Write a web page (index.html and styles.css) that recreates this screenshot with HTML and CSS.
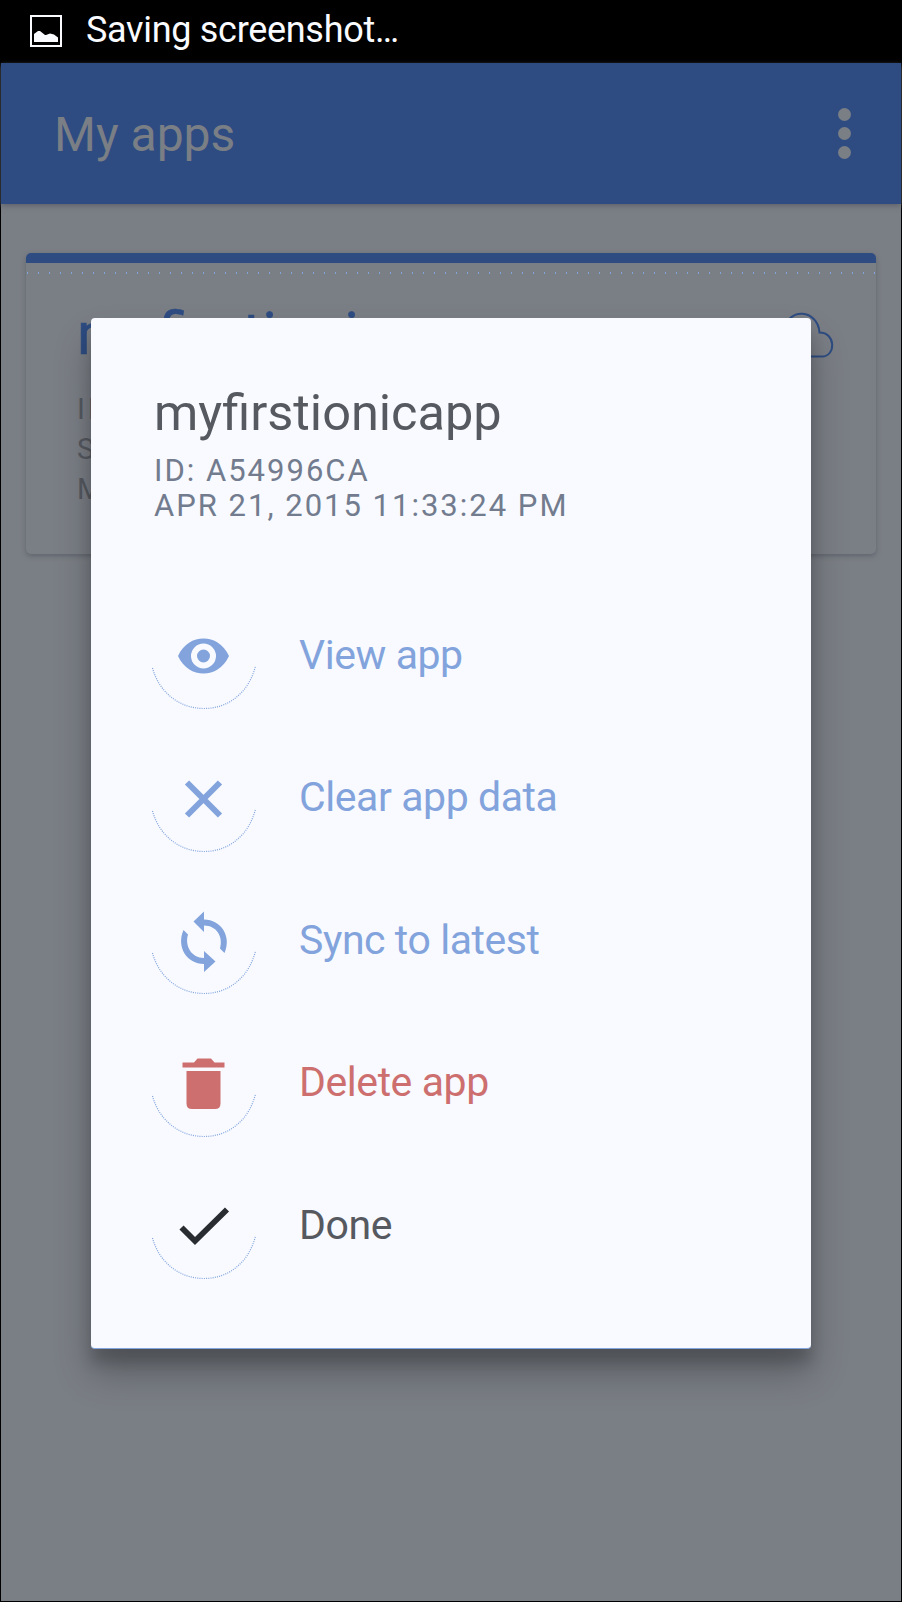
FILE: index.html
```html
<!DOCTYPE html>
<html lang="en">
<head>
<meta charset="utf-8">
<title>My apps</title>
<link rel="stylesheet" href="styles.css">
</head>
<body>
<div class="screen">
  <div class="status">
    <svg class="status-icon" viewBox="0 0 32 32"><rect x="1" y="1" width="30" height="30" fill="none" stroke="#f9fbff" stroke-width="2"/><path d="M4 27v-8l4-3 2 0 5 4 1 0 4-1.500 4 1 4 3v4.500z" fill="#f9fbff"/></svg>
    <span class="status-text">Saving screenshot…</span>
  </div>
  <div class="page">
    <header class="bar">
      <h1 class="bar-title">My apps</h1>
      <div class="dots"><i class="dot"></i><i class="dot"></i><i class="dot"></i></div>
    </header>
    <section class="card">
      <div class="card-head">
        <h2 class="card-title">myfirstionicapp</h2>
        <svg class="cloud" viewBox="0 0 66 46"><path d="M15 44.500h39c14 0 14-24-2.500-24C50-3 19-5 17 18 0 16-3 44.500 15 44.500z" fill="none" stroke="#2e4c82" stroke-width="2"/></svg>
      </div>
      <div class="card-meta"><p>ID</p><p>S</p><p>M</p></div>
    </section>
  </div>
  <div class="modal">
    <h2 class="modal-title">myfirstionicapp</h2>
    <p class="meta meta-id">ID: A54996CA</p>
    <p class="meta meta-date">APR 21, 2015 11:33:24 PM</p>
    <div class="actions">
      <div class="action">
        <svg class="icon" viewBox="0 0 106 106"><path class="ring" d="M1.500 66C8 90 28 106.500 53 106.500S98 90 104.500 64"/><path class="glyph" fill-rule="evenodd" d="M27.500 54C33 42 43 36.500 53 36.500S73 42 78.500 54C73 66 63 71.500 53 71.500S33 66 27.500 54zM53 41.500a12.500 12.500 0 1 0 0 25a12.500 12.500 0 1 0 0-25zM53 47.500a6.500 6.500 0 1 1 0 13a6.500 6.500 0 1 1 0-13z"/></svg>
        <span class="label">View app</span>
      </div>
      <div class="action">
        <svg class="icon" viewBox="0 0 106 106"><path class="ring" d="M1.500 66C8 90 28 106.500 53 106.500S98 90 104.500 64"/><path class="glyph" d="M36.500 37.500L69.500 70.500M69.500 37.500L36.500 70.500" fill="none" stroke="#82a3dc" stroke-width="6"/></svg>
        <span class="label">Clear app data</span>
      </div>
      <div class="action">
        <svg class="icon" viewBox="0 0 106 106"><path class="ring" d="M1.500 66C8 90 28 106.500 53 106.500S98 90 104.500 64"/><path class="glyph" d="M53.500 24.500v8c17 0 28 17 20.500 33.500l-4.500-4.500c3.500-12-3.500-23-16-23v6.500L43 34.500zM53.500 85v-8c-17 0-28-17-20.500-34l4.500 4.500C34 59 41 71 53.500 71v-7L65 74.500z"/></svg>
        <span class="label">Sync to latest</span>
      </div>
      <div class="action danger">
        <svg class="icon" viewBox="0 0 106 106"><path class="ring" d="M1.500 66C8 90 28 106.500 53 106.500S98 90 104.500 64"/><path class="glyph" d="M32 32.500h11.500l3.500-4h13.500l3.500 4h10v5H32zM36 41h34v32.500q0 5.500-5.500 5.500h-23q-5.500 0-5.500-5.500z"/></svg>
        <span class="label">Delete app</span>
      </div>
      <div class="action done">
        <svg class="icon" viewBox="0 0 106 106"><path class="ring" d="M1.500 66C8 90 28 106.500 53 106.500S98 90 104.500 64"/><path class="glyph" d="M31 55.500l13.500 13.500L76.500 37.500" fill="none" stroke="#292c30" stroke-width="5.800"/></svg>
        <span class="label">Done</span>
      </div>
    </div>
  </div>
</div>
</body>
</html>
```
FILE: styles.css
```css
* { box-sizing: border-box; }
body, h1, h2, p { margin: 0; font-weight: 400; }
body { background: #000; font-family: Roboto, sans-serif; }
.screen { position: relative; width: 902px; height: 1602px; overflow: hidden; background: #000; white-space: nowrap; padding: 0 1px 1px; }
.status { height: 63px; display: flex; align-items: flex-start; padding: 15px 0 0 29px; color: #f9fbff; }
.status-icon { width: 32px; height: 32px; margin-right: 24px; }
.status-text { font-size: 36px; line-height: 31px; letter-spacing: -0.300px; }
.page { height: 1538px; background: #7a7e85; }
.bar { height: 141px; background: #2e4c82; display: flex; justify-content: space-between; align-items: flex-start; padding: 42px 50px 0 53px; box-shadow: 0 2px 5px #60646c; }
.bar-title { font-size: 48px; line-height: 60px; color: #7a7e85; }
.dots { display: flex; flex-direction: column; gap: 6px; padding-top: 3px; }
.dot { width: 13px; height: 13px; border-radius: 50%; background: #7a7e85; }
.card { margin: 49px 25px 0; height: 301px; border-top: 10px solid #2e4c82; border-radius: 5px; box-shadow: 0 2px 5px #60646c; padding: 37px 42px 0 51px; background: radial-gradient(circle, #82a3dc 0.600px, transparent 0.700px) 7px 8px / 11px 4px repeat-x; }
.card-head { display: flex; justify-content: space-between; }
.card-title { font-size: 60px; line-height: 67px; height: 70px; color: #2e4c82; -webkit-text-stroke: 0.500px #2e4c82; }
.cloud { width: 66px; height: 46px; margin-top: 12px; }
.card-meta { padding-top: 19px; font-size: 29px; line-height: 40px; letter-spacing: 3px; color: #565960; }
.modal { position: absolute; left: 91px; top: 318px; width: 720px; height: 1031px; border-radius: 4px; border-bottom: 1px solid #82a3dc; background: #f8faff; box-shadow: 0 24px 36px rgba(0, 0, 0, .25), 0 14px 14px rgba(0, 0, 0, .16); padding: 64px 62px 0 63px; }
.modal-title { font-size: 50.500px; line-height: 61px; height: 60px; color: #565960; }
.meta { font-size: 31px; line-height: 35px; color: #727c8e; letter-spacing: 2px; }
.meta-id { padding-top: 11px; }
.actions { padding-top: 79px; }
.action { display: flex; height: 142.500px; color: #82a3dc; }
.icon { width: 106px; height: 106px; margin: 0 42.500px 0 -3.500px; fill: #82a3dc; overflow: visible; }
.glyph { transform: translateX(-0.500px); }
.ring { fill: none; stroke: #82a3dc; stroke-width: 1.200px; stroke-dasharray: 1 1.200; }
.label { font-size: 41px; line-height: 48px; padding-top: 28.500px; letter-spacing: -0.430px; }
.danger { color: #cd6f6f; }
.danger .icon { fill: #cd6f6f; }
.done { color: #565960; }
```
